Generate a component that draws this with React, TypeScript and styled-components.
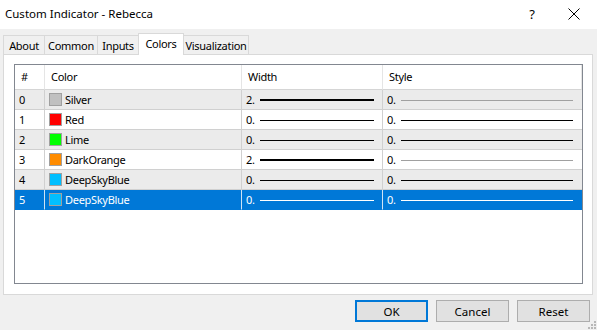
import styled, { createGlobalStyle } from "styled-components";

const GlobalStyle = createGlobalStyle`
  html, body {
    margin: 0;
    padding: 0;
    background: #f0f0f0;
  }
  body {
    font-family: "Noto Sans", "Liberation Sans", sans-serif;
    font-size: 12px;
    color: #000;
  }
`;

type Row = {
  idx: number;
  name: string;
  swatch: string;
  width: number;
  styleLine: string;
};

const rows: Row[] = [
  { idx: 0, name: "Silver", swatch: "#c0c0c0", width: 2, styleLine: "#a0a0a0" },
  { idx: 1, name: "Red", swatch: "#ff0000", width: 0, styleLine: "#000" },
  { idx: 2, name: "Lime", swatch: "#00ff00", width: 0, styleLine: "#000" },
  { idx: 3, name: "DarkOrange", swatch: "#ff8c00", width: 2, styleLine: "#a0a0a0" },
  { idx: 4, name: "DeepSkyBlue", swatch: "#00bfff", width: 0, styleLine: "#000" },
  { idx: 5, name: "DeepSkyBlue", swatch: "#00bfff", width: 0, styleLine: "#000" },
];

const tabs = [
  { label: "About", w: 42 },
  { label: "Common", w: 54 },
  { label: "Inputs", w: 42 },
  { label: "Colors", w: 46 },
  { label: "Visualization", w: 66 },
];

const Window = styled.div`
  width: 597px;
  height: 330px;
  background: #f0f0f0;
  display: flex;
  flex-direction: column;
  overflow: hidden;
  position: relative;
`;

const TitleBar = styled.div`
  height: 29px;
  background: #fff;
  display: flex;
  align-items: center;
  padding-left: 5px;
  font-size: 11.5px;
`;

const Title = styled.div`
  flex: 1;
  margin-top: -2px;
`;

const TitleButton = styled.div<{ $w: number }>`
  width: ${(p) => p.$w}px;
  height: 29px;
  display: flex;
  align-items: center;
  justify-content: center;
  font-size: 13px;
  margin-top: -2px;
`;

const Content = styled.div`
  padding: 5px 4px 0 3px;
  display: flex;
  flex-direction: column;
`;

const TabStrip = styled.div`
  display: flex;
  align-items: flex-end;
  height: 21px;
  position: relative;
  z-index: 1;
  margin-bottom: -1px;
`;

const Tab = styled.div<{ $active?: boolean; $w: number }>`
  box-sizing: border-box;
  width: ${(p) => p.$w}px;
  height: ${(p) => (p.$active ? 22 : 20)}px;
  border: 1px solid #d9d9d9;
  border-bottom: ${(p) => (p.$active ? "none" : "1px solid #d9d9d9")};
  margin-left: -1px;
  background: ${(p) => (p.$active ? "#fff" : "#f0f0f0")};
  display: flex;
  align-items: center;
  justify-content: center;
  padding-bottom: ${(p) => (p.$active ? 3 : 0)}px;
  font-size: 11px;
  letter-spacing: -0.3px;

  &:first-child {
    margin-left: 0;
  }
`;

const Panel = styled.div`
  box-sizing: border-box;
  height: 241px;
  background: #fff;
  border: 1px solid #d9d9d9;
  padding: 9px 9px 10px 10px;
  display: flex;
`;

const ListBox = styled.div`
  flex: 1;
  border: 1px solid #828790;
  background: #fff;
  display: grid;
  grid-template-columns: 30px 197px 141px 1fr;
  grid-template-rows: 25px;
  grid-auto-rows: 20px;
  align-content: start;
`;

const HeadCell = styled.div`
  box-sizing: border-box;
  border-right: 1px solid #e5e5e5;
  border-bottom: 1px solid #d5d5d5;
  display: flex;
  align-items: center;
  padding-left: 6px;
  padding-bottom: 1px;
  font-size: 11px;
  letter-spacing: -0.3px;

  &:last-of-type {
    border-right: none;
  }
`;

const Cell = styled.div<{ $even: boolean; $sel: boolean; $last?: boolean }>`
  box-sizing: border-box;
  background: ${(p) => (p.$sel ? "#0078d7" : p.$even ? "#ebebeb" : "#fff")};
  color: ${(p) => (p.$sel ? "#fff" : "#000")};
  border-right: ${(p) =>
    p.$last ? "none" : `1px solid ${p.$sel ? "#cfe3f5" : "#d0d0d0"}`};
  border-bottom: 1px solid ${(p) => (p.$sel ? "#0078d7" : "#d0d0d0")};
  display: flex;
  align-items: center;
  padding-left: 4px;
  font-size: 11px;
  letter-spacing: -0.3px;
  white-space: nowrap;
`;

const Swatch = styled.span<{ $c: string }>`
  width: 11px;
  height: 11px;
  background: ${(p) => p.$c};
  border: 1px solid #a0a0a0;
  margin-right: 3px;
  flex-shrink: 0;
`;

const Value = styled.span`
  width: 14px;
  flex-shrink: 0;
`;

const Line = styled.span<{ $thick: number; $color: string; $len: number }>`
  width: ${(p) => p.$len}px;
  height: ${(p) => p.$thick}px;
  background: ${(p) => p.$color};
  margin-top: 1px;
`;

const Footer = styled.div`
  display: flex;
  justify-content: flex-end;
  gap: 8px;
  padding: 5px 7px 0 0;
`;

const Button = styled.button<{ $primary?: boolean }>`
  box-sizing: border-box;
  width: 73px;
  height: 22px;
  margin: 0;
  padding: 0;
  background: #e1e1e1;
  border: ${(p) => (p.$primary ? "2px solid #0078d7" : "1px solid #adadad")};
  font-family: "Noto Sans", "Liberation Sans", sans-serif;
  font-size: 11.5px;
  color: #000;
`;

const Grip = styled.svg`
  position: absolute;
  right: 1px;
  bottom: 1px;
`;

export default function App() {
  return (
    <>
      <GlobalStyle />
      <Window>
        <TitleBar>
          <Title>Custom Indicator - Rebecca</Title>
          <TitleButton $w={38}>?</TitleButton>
          <TitleButton $w={46}>
            <svg width="12" height="12" viewBox="0 0 12 12">
              <path d="M0.5 0.5 L11.5 11.5 M11.5 0.5 L0.5 11.5" stroke="#000" strokeWidth="1" />
            </svg>
          </TitleButton>
        </TitleBar>
        <Content>
          <TabStrip>
            {tabs.map((t) => (
              <Tab key={t.label} $w={t.w} $active={t.label === "Colors"}>
                {t.label}
              </Tab>
            ))}
          </TabStrip>
          <Panel>
            <ListBox>
              <HeadCell>#</HeadCell>
              <HeadCell>Color</HeadCell>
              <HeadCell>Width</HeadCell>
              <HeadCell>Style</HeadCell>
              {rows.map((r) => {
                const even = r.idx % 2 === 0;
                const sel = r.idx === 5;
                const lineColor = sel ? "#fff" : "#000";
                return [
                  <Cell key={`i${r.idx}`} $even={even} $sel={sel}>
                    {r.idx}
                  </Cell>,
                  <Cell key={`c${r.idx}`} $even={even} $sel={sel}>
                    <Swatch $c={r.swatch} />
                    {r.name}
                  </Cell>,
                  <Cell key={`w${r.idx}`} $even={even} $sel={sel}>
                    <Value>{r.width}.</Value>
                    <Line $thick={r.width === 2 ? 2 : 1} $color={lineColor} $len={114} />
                  </Cell>,
                  <Cell key={`s${r.idx}`} $even={even} $sel={sel} $last>
                    <Value>0.</Value>
                    <Line $thick={1} $color={sel ? "#fff" : r.styleLine} $len={172} />
                  </Cell>,
                ];
              })}
            </ListBox>
          </Panel>
        </Content>
        <Footer>
          <Button $primary>OK</Button>
          <Button>Cancel</Button>
          <Button>Reset</Button>
        </Footer>
        <Grip width="8" height="8" viewBox="0 0 8 8">
          <rect x="6" y="0" width="2" height="2" fill="#b8b8b8" />
          <rect x="3" y="3" width="2" height="2" fill="#b8b8b8" />
          <rect x="6" y="3" width="2" height="2" fill="#b8b8b8" />
          <rect x="0" y="6" width="2" height="2" fill="#b8b8b8" />
          <rect x="3" y="6" width="2" height="2" fill="#b8b8b8" />
          <rect x="6" y="6" width="2" height="2" fill="#b8b8b8" />
        </Grip>
      </Window>
    </>
  );
}
